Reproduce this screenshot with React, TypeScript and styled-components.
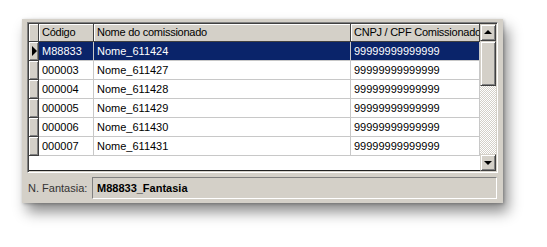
import React from "react";
import styled, { createGlobalStyle } from "styled-components";

const Global = createGlobalStyle`
  html, body { margin: 0; padding: 0; background: #ffffff; }
  body { font-family: "Liberation Sans", Arial, sans-serif; font-size: 11px; }
`;

const Page = styled.div`
  width: 547px;
  height: 247px;
  padding: 19px 0 0 22px;
  box-sizing: border-box;
  background: #ffffff;
`;

const Panel = styled.div`
  width: 481px;
  height: 184px;
  box-sizing: border-box;
  background: #d4d0c8;
  padding: 3px 5px 0 5px;
  display: flex;
  flex-direction: column;
  box-shadow: 5px 9px 13px rgba(0, 0, 0, 0.45), 1px 1px 3px rgba(0, 0, 0, 0.25);
`;

const GridFrame = styled.div`
  height: 151px;
  box-sizing: border-box;
  display: flex;
  background: #ffffff;
  border-top: 1px solid #808080;
  border-left: 1px solid #808080;
  border-right: 1px solid #ffffff;
  border-bottom: 1px solid #ffffff;
  box-shadow: inset 1px 1px 0 #404040, inset -1px -1px 0 #d4d0c8;
  padding: 1px;
`;

const Body = styled.div`
  flex: 1;
  display: flex;
  flex-direction: column;
  overflow: hidden;
  background: #ffffff;
  border-bottom: 1px solid #202020;
`;

const cols = "10px 55px 257px 1fr";

const HeaderRow = styled.div`
  display: grid;
  grid-template-columns: ${cols};
  height: 18px;
  box-sizing: border-box;
  background: #d4d0c8;
  border-bottom: 1px solid #404040;
`;

const HeaderCell = styled.div`
  box-sizing: border-box;
  border-right: 1px solid #404040;
  box-shadow: inset 1px 1px 0 #ffffff;
  padding: 0 0 0 3px;
  line-height: 17px;
  color: #000000;
  letter-spacing: -0.25px;
  white-space: nowrap;
  overflow: hidden;
`;

const DataRow = styled.div<{ $selected?: boolean }>`
  display: grid;
  grid-template-columns: ${cols};
  height: 19px;
  box-sizing: border-box;
  background: ${(p) => (p.$selected ? "#0a246a" : "#ffffff")};
  color: ${(p) => (p.$selected ? "#ffffff" : "#000000")};
`;

const Indicator = styled.div`
  box-sizing: border-box;
  background: #d4d0c8;
  border-right: 1px solid #404040;
  border-bottom: 1px solid #404040;
  box-shadow: inset 1px 1px 0 #ffffff, inset -1px -1px 0 #808080;
  display: flex;
  align-items: center;
  justify-content: center;
`;

const Pointer = styled.div`
  width: 0;
  height: 0;
  border-top: 5px solid transparent;
  border-bottom: 5px solid transparent;
  border-left: 5px solid #000000;
  margin-left: 1px;
`;

const Cell = styled.div`
  box-sizing: border-box;
  border-right: 1px solid #c8c8c8;
  border-bottom: 1px solid #c8c8c8;
  padding-left: 3px;
  line-height: 18px;
  white-space: nowrap;
  overflow: hidden;
`;

const Filler = styled.div`
  flex: 1;
`;

const Scrollbar = styled.div`
  width: 16px;
  display: flex;
  flex-direction: column;
  background: repeating-conic-gradient(#d4d0c8 0 25%, #ffffff 0 50%) 0 0 / 2px 2px;
`;

const SBButton = styled.div<{ $h: number }>`
  height: ${(p) => p.$h}px;
  box-sizing: border-box;
  background: #d4d0c8;
  border-top: 1px solid #d4d0c8;
  border-left: 1px solid #d4d0c8;
  border-right: 1px solid #404040;
  border-bottom: 1px solid #404040;
  box-shadow: inset 1px 1px 0 #ffffff, inset -1px -1px 0 #808080;
  display: flex;
  align-items: center;
  justify-content: center;
`;

const Track = styled.div`
  flex: 1;
`;

const Arrow = styled.div<{ $up?: boolean }>`
  width: 0;
  height: 0;
  border-left: 4px solid transparent;
  border-right: 4px solid transparent;
  ${(p) =>
    p.$up
      ? "border-bottom: 4px solid #000000; margin-top: -1px;"
      : "border-top: 4px solid #000000; margin-top: 1px;"}
`;

const FieldRow = styled.div`
  display: flex;
  align-items: center;
  margin-top: 4px;
  height: 22px;
`;

const Label = styled.div`
  width: 64px;
  padding-left: 1px;
  color: #333333;
  font-size: 11px;
`;

const Field = styled.div`
  flex: 1;
  height: 22px;
  box-sizing: border-box;
  margin-right: 1px;
  border-top: 1px solid #808080;
  border-left: 1px solid #808080;
  border-right: 1px solid #ffffff;
  border-bottom: 1px solid #ffffff;
  padding-left: 4px;
  line-height: 20px;
  font-weight: bold;
  color: #000000;
  background: #d4d0c8;
`;

const rows = [
  ["M88833", "Nome_611424", "99999999999999"],
  ["000003", "Nome_611427", "99999999999999"],
  ["000004", "Nome_611428", "99999999999999"],
  ["000005", "Nome_611429", "99999999999999"],
  ["000006", "Nome_611430", "99999999999999"],
  ["000007", "Nome_611431", "99999999999999"],
];

export default function App() {
  return (
    <Page>
      <Global />
      <Panel>
        <GridFrame>
          <Body>
            <HeaderRow>
              <HeaderCell />
              <HeaderCell>Código</HeaderCell>
              <HeaderCell>Nome do comissionado</HeaderCell>
              <HeaderCell>CNPJ / CPF Comissionado</HeaderCell>
            </HeaderRow>
            {rows.map((r, i) => (
              <DataRow key={r[0]} $selected={i === 0}>
                <Indicator>{i === 0 && <Pointer />}</Indicator>
                <Cell>{r[0]}</Cell>
                <Cell>{r[1]}</Cell>
                <Cell>{r[2]}</Cell>
              </DataRow>
            ))}
            <Filler />
          </Body>
          <Scrollbar>
            <SBButton $h={17}>
              <Arrow $up />
            </SBButton>
            <SBButton $h={45} />
            <Track />
            <SBButton $h={17}>
              <Arrow />
            </SBButton>
          </Scrollbar>
        </GridFrame>
        <FieldRow>
          <Label>N. Fantasia:</Label>
          <Field>M88833_Fantasia</Field>
        </FieldRow>
      </Panel>
    </Page>
  );
}
